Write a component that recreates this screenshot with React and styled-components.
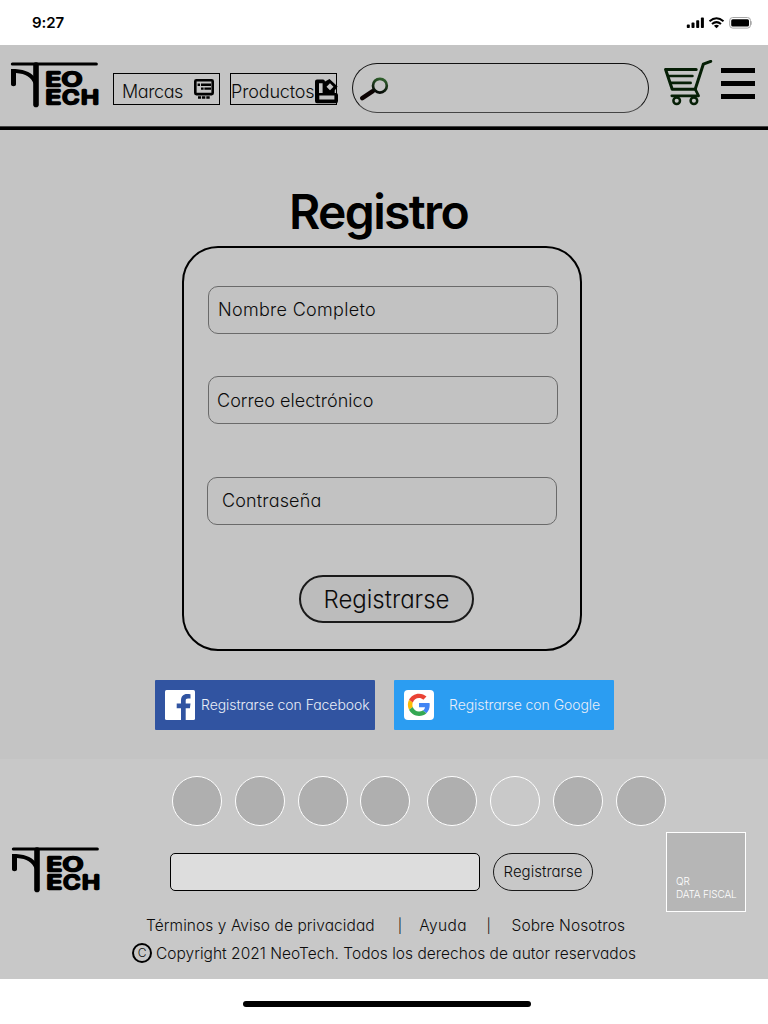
import React from "react";
import styled, { createGlobalStyle } from "styled-components";

const GlobalStyle = createGlobalStyle`
  *, *::before, *::after { box-sizing: border-box; }
  body {
    margin: 0;
    background: #fff;
    color: #0c0c0c;
    font-family: Inter, "Liberation Sans", sans-serif;
    font-weight: 300;
    font-feature-settings: "cv11";
  }
  svg { display: block; flex: none; }
`;

const Screen = styled.div`
  width: 768px;
  height: 1024px;
  display: flex;
  flex-direction: column;
  overflow: hidden;
`;

const StatusBar = styled.div`
  height: 45px;
  flex: none;
  display: flex;
  align-items: center;
  justify-content: space-between;
  padding: 0 16px 0 32px;
  color: #000;
`;

const Time = styled.span`
  font-size: 15px;
  font-weight: 600;
  letter-spacing: -0.1px;
`;

const Header = styled.header`
  height: 85px;
  flex: none;
  display: flex;
  align-items: flex-start;
  padding: 15px 13px 0 10px;
  background: #c4c4c4;
  border-bottom: 3px solid #000;
  box-shadow: inset 0 -1px #444;
`;

const Text = styled.span`
  font-size: ${(p) => p.$size || 15.5}px;
  letter-spacing: ${(p) => p.$track || 0}px;
  line-height: 1.2;
  white-space: nowrap;
`;

const NavButton = styled.a`
  width: 107px;
  height: 32px;
  flex: none;
  display: flex;
  justify-content: space-between;
  margin: 13px 0 0 ${(p) => p.$gap}px;
  padding: ${(p) => p.$pad};
  border: 1px solid #000;
`;

const NavIcon = styled.span`
  flex: none;
  height: 25px;
  margin: -2px ${(p) => p.$out || 0}px 0 0;
`;

const Search = styled.div`
  width: 297px;
  height: 50px;
  flex: none;
  margin: 3px 0 0 15px;
  padding: 12px 7px;
  border: 1px solid #111;
  border-bottom-color: #444;
  border-radius: 25px;
`;

const CartButton = styled.div`
  flex: none;
  margin: 0 0 0 15px;
`;

const Menu = styled.div`
  width: 34px;
  display: flex;
  flex-direction: column;
  gap: 8px;
  margin: 8px 0 0 8px;
`;

const MenuBar = styled.span`
  height: 5px;
  background: #000;
`;

const Main = styled.main`
  height: 629px;
  flex: none;
  display: flex;
  flex-direction: column;
  background: #c4c4c4;
`;

const Title = styled.h1`
  margin: 52px 0 0 289px;
  height: 64px;
  color: #000;
  font-size: 48px;
  font-weight: 570;
  line-height: 60px;
  letter-spacing: -1.65px;
`;

const Card = styled.form`
  width: 400px;
  height: 405px;
  flex: none;
  display: flex;
  flex-direction: column;
  margin-left: 182px;
  padding: 38px 0 0 23px;
  border: 2px solid #000;
  border-radius: 36px;
`;

const Field = styled.label`
  width: 350px;
  height: 48px;
  flex: none;
  display: flex;
  align-items: center;
  margin: 0 0 ${(p) => p.$after}px ${(p) => p.$shift}px;
  padding: ${(p) => p.$top || 0}px 0 1px ${(p) => p.$indent}px;
  background: #c2c2c2;
  border: 1px solid #6a6a6a;
  border-radius: 10px;
`;

const Pill = styled.div`
  width: ${(p) => p.$w}px;
  height: ${(p) => p.$h}px;
  flex: none;
  display: flex;
  align-items: center;
  justify-content: center;
  margin: ${(p) => p.$margin};
  padding-top: ${(p) => p.$top || 0}px;
  background: ${(p) => p.$bg || "transparent"};
  border: ${(p) => p.$line}px solid #1a1a1a;
  border-radius: ${(p) => p.$h / 2}px;
`;

const Socials = styled.div`
  display: flex;
  gap: 19px;
  margin: 29px 0 0 155px;
`;

const SocialButton = styled.div`
  width: 220px;
  height: 50px;
  display: flex;
  align-items: center;
  gap: ${(p) => p.$gap}px;
  padding-left: 10px;
  background: ${(p) => p.$bg};
  color: #e9eef8;
  border-radius: 1px;
`;

const Footer = styled.footer`
  height: 220px;
  flex: none;
  display: flex;
  flex-direction: column;
  padding-top: 17px;
  background: #c8c8c8;
`;

const Circles = styled.div`
  display: flex;
  padding-left: 172px;
`;

const Circle = styled.span`
  width: 50px;
  height: 50px;
  flex: none;
  margin-right: ${(p) => p.$after}px;
  background: ${(p) => (p.$empty ? "#c9c9c9" : "#afafaf")};
  border: 1px solid #fff;
  border-radius: 50%;
`;

const Newsletter = styled.div`
  height: 80px;
  display: flex;
  align-items: flex-start;
  margin-top: 6px;
  padding-left: 11px;
`;

const LogoSlot = styled.div`
  width: 159px;
  padding-top: 13px;
`;

const EmailBox = styled.div`
  width: 310px;
  height: 38px;
  margin-top: 21px;
  background: #ddd;
  border: 1px solid #000;
  border-radius: 5px;
`;

const QrBox = styled.div`
  width: 80px;
  height: 80px;
  display: flex;
  flex-direction: column;
  justify-content: flex-end;
  margin-left: 73px;
  padding: 0 0 10px 9px;
  background: #b6b6b6;
  border: 1px solid #fff;
  color: #fff;
`;

const QrLine = styled.span`
  font-size: 10px;
  line-height: 13px;
  letter-spacing: -0.15px;
  white-space: nowrap;
`;

const Links = styled.nav`
  display: flex;
  align-items: center;
  height: 28px;
  padding-left: 146px;
`;

const Divider = styled.span`
  width: 44.500px;
  padding-left: ${(p) => p.$pad}px;
  font-size: 14px;
  line-height: 18px;
`;

const Copyright = styled.div`
  display: flex;
  align-items: center;
  gap: 4px;
  height: 28px;
  padding-left: 132px;
`;

const CopyMark = styled.span`
  width: 20px;
  height: 20px;
  display: flex;
  align-items: center;
  justify-content: center;
  margin-bottom: 2px;
  border: 2px solid #000;
  border-radius: 50%;
  font-size: 12px;
  line-height: 16px;
`;

const HomeArea = styled.div`
  flex: 1;
  display: flex;
  justify-content: center;
  padding: 22px 0 0 6px;
`;

const HomeIndicator = styled.span`
  width: 288px;
  height: 6px;
  background: #000;
  border-radius: 3px;
`;

function Logo() {
  return (
    <svg width="90" height="48" viewBox="10 60 90 48">
      <g fill="none" stroke="#000" strokeLinecap="round">
        <path d="M12.400 64H96.300" strokeWidth="3.200" />
        <path d="M36 65V104.400" strokeWidth="5.600" />
      </g>
      <path d="M11 69C23 69 30 71.500 34 76.500V84C31 77.500 26 73.600 16 73V84.500Q16 86.300 13.500 86.300Q11 86.300 11 84.500Z" />
      <g
        stroke="#000"
        strokeWidth="2.400"
        strokeLinejoin="round"
        fontFamily="Inter, sans-serif"
        fontWeight="400"
        fontSize="18.200"
      >
        <text x="45.400" y="86" textLength="15.500" lengthAdjust="spacingAndGlyphs">E</text>
        <text x="61.700" y="86" textLength="20.500" lengthAdjust="spacingAndGlyphs">O</text>
        <text x="45.400" y="103.700" textLength="15.500" lengthAdjust="spacingAndGlyphs">E</text>
        <text x="62.300" y="103.700" textLength="17" lengthAdjust="spacingAndGlyphs">C</text>
        <text x="81.100" y="103.700" textLength="18" lengthAdjust="spacingAndGlyphs">H</text>
      </g>
    </svg>
  );
}

function StatusIcons() {
  return (
    <svg width="68" height="14" viewBox="684 16 68 14">
      <rect x="686.800" y="24.600" width="3" height="3.400" rx="0.800" />
      <rect x="691.500" y="22.600" width="3" height="5.400" rx="0.800" />
      <rect x="696.200" y="20.200" width="3" height="7.800" rx="0.800" />
      <rect x="700.900" y="17.600" width="3" height="10.400" rx="0.800" />
      <g fill="none" stroke="#000" strokeWidth="2">
        <path d="M709.500 21.200Q716.500 15.200 723.500 21.200" />
        <path d="M712 24Q716.500 20.200 721 24" />
      </g>
      <path d="M713.900 25.700Q716.500 23.700 719.100 25.700L716.500 28.300Z" />
      <rect x="729.700" y="17.500" width="20.800" height="10.600" rx="3" fill="none" stroke="#a6a6a6" />
      <rect x="731.200" y="19.200" width="17.800" height="7.400" rx="1.500" />
      <path d="M751.300 21v4q1.300-.6 1.300-2t-1.300-2z" fill="#a6a6a6" />
    </svg>
  );
}

function MonitorIcon() {
  return (
    <svg width="20" height="20" viewBox="194 79 20 20">
      <rect x="195.300" y="80.300" width="17.400" height="13.800" rx="1" fill="none" stroke="#000" strokeWidth="2.600" />
      <path d="M197.600 83.600h2.400v2.400h-2.400zM201 83.600h10v2.400h-10zM201 87.400h2.600v2.400H201zM204.400 87.400h6.600v2.400h-6.600zM198 96.200h3v2.600h-3zM201.900 96.200h3.400v2.600h-3.400zM206.300 96.200h3.400v2.600h-3.400z" />
    </svg>
  );
}

function SwatchIcon() {
  return (
    <svg width="24" height="25" viewBox="315 79 24 25" overflow="visible">
      <path
        fillRule="evenodd"
        d="M317 79.500H323Q324.700 79.500 325 81.600L329.500 79L337.600 86.500L334.700 90.600V93H336Q338 93 338 95V101Q338 103.300 336 103.300H317Q315 103.300 315 101V81.500Q315 79.500 317 79.500ZM319 83.300V93H322.600V83.300ZM330 83.200L326.500 86.700L330 90.200L333.500 86.700ZM319.300 95.600V99.600H334.400V95.600Z"
      />
    </svg>
  );
}

function SearchIcon() {
  return (
    <svg width="30" height="26" viewBox="360 76 30 26">
      <defs>
        <linearGradient id="lens" x1="0.700" y1="0" x2="0.400" y2="1">
          <stop offset="0" stopColor="#2f5f2c" />
          <stop offset="1" stopColor="#050805" />
        </linearGradient>
      </defs>
      <path d="M372.800 91.200L362.300 98.200" stroke="#0c0303" strokeWidth="4.400" strokeLinecap="round" />
      <circle cx="379.900" cy="85.700" r="6.900" fill="none" stroke="url(#lens)" strokeWidth="2.700" />
    </svg>
  );
}

function CartIcon() {
  return (
    <svg width="49" height="46" viewBox="664 60 49 46">
      <g fill="none" stroke="#061f06" strokeWidth="3" strokeLinecap="round" strokeLinejoin="round">
        <path d="M710.700 61.400L703.300 64.200L695.200 89.200H672.200L665.600 69.500H696.200" />
        <path d="M669.500 76H692.400M671.500 82.900H690.600" strokeWidth="2.700" />
        <path d="M695.200 89.200L698.600 95.800H671.800" strokeWidth="2.700" />
        <circle cx="676.700" cy="100.700" r="3.300" strokeWidth="2.500" />
        <circle cx="693.900" cy="100.700" r="3.300" strokeWidth="2.500" />
      </g>
    </svg>
  );
}

function FacebookIcon() {
  return (
    <svg width="30" height="30" viewBox="0 0 30 30">
      <rect width="30" height="30" rx="1.500" fill="#fff" />
      <path
        fill="#3154a1"
        d="M16 30V18.200H11.700V13.500H16V10.500C16 6.500 18.400 4.100 22 4.100C23.600 4.100 25 4.200 25.500 4.300V8.500H23C21.200 8.500 20.700 9.400 20.700 10.700V13.500H25.500L24.900 18.200H20.700V30Z"
      />
    </svg>
  );
}

function GoogleIcon() {
  return (
    <svg width="30" height="30" viewBox="0 0 30 30">
      <rect width="30" height="30" rx="4" fill="#fff" />
      <g transform="translate(3.850 3.650) scale(0.465)">
        <path fill="#EA4335" d="M24 9.500c3.540 0 6.710 1.220 9.210 3.600l6.850-6.850C35.900 2.380 30.470 0 24 0 14.620 0 6.510 5.380 2.560 13.220l7.980 6.190C12.430 13.720 17.740 9.500 24 9.500z" />
        <path fill="#4285F4" d="M46.980 24.550c0-1.570-.15-3.090-.38-4.550H24v9.020h12.940c-.58 2.960-2.260 5.480-4.780 7.180l7.730 6c4.510-4.180 7.090-10.360 7.090-17.650z" />
        <path fill="#FBBC05" d="M10.530 28.590c-.48-1.450-.76-2.990-.76-4.590s.27-3.140.76-4.590l-7.980-6.190C.92 16.460 0 20.120 0 24c0 3.880.92 7.540 2.560 10.780l7.970-6.190z" />
        <path fill="#34A853" d="M24 48c6.480 0 11.930-2.130 15.890-5.810l-7.730-6c-2.150 1.450-4.920 2.300-8.160 2.300-6.260 0-11.570-4.220-13.470-9.910l-7.980 6.190C6.510 42.620 14.620 48 24 48z" />
      </g>
    </svg>
  );
}

const circles = [13, 13, 12, 17, 13, 13, 13, 0];

export default function App() {
  return (
    <Screen>
      <GlobalStyle />
      <StatusBar>
        <Time>9:27</Time>
        <StatusIcons />
      </StatusBar>

      <Header>
        <Logo />
        <NavButton $gap={13} $pad="7px 5px 0 8px">
          <Text $size={18} $track={-0.4}>Marcas</Text>
          <NavIcon><MonitorIcon /></NavIcon>
        </NavButton>
        <NavButton $gap={10} $pad="7px 0 0 0">
          <Text $size={18} $track={-0.15}>Productos</Text>
          <NavIcon $out={-3}><SwatchIcon /></NavIcon>
        </NavButton>
        <Search><SearchIcon /></Search>
        <CartButton><CartIcon /></CartButton>
        <Menu>
          <MenuBar />
          <MenuBar />
          <MenuBar />
        </Menu>
      </Header>

      <Main>
        <Title>Registro</Title>
        <Card>
          <Field $after={42} $shift={1} $indent={9}>
            <Text $size={18} $track={0.3}>Nombre Completo</Text>
          </Field>
          <Field $after={53} $shift={1} $indent={8} $top={2}>
            <Text $size={18} $track={0.04}>Correo electrónico</Text>
          </Field>
          <Field $after={50} $shift={0} $indent={14}>
            <Text $size={18} $track={0.15}>Contraseña</Text>
          </Field>
          <Pill $w={175} $h={48} $line={2} $bg="#bcbcbc" $margin="0 0 0 92px" $top={2}>
            <Text $size={24}>Registrarse</Text>
          </Pill>
        </Card>
        <Socials>
          <SocialButton $bg="#3154a1" $gap={6}>
            <FacebookIcon />
            <Text $size={14} $track={-0.07}>Registrarse con Facebook</Text>
          </SocialButton>
          <SocialButton $bg="#2b9df2" $gap={15}>
            <GoogleIcon />
            <Text $size={14} $track={-0.07}>Registrarse con Google</Text>
          </SocialButton>
        </Socials>
      </Main>

      <Footer>
        <Circles>
          {circles.map((gap, i) => (
            <Circle key={i} $after={gap} $empty={i === 5} />
          ))}
        </Circles>
        <Newsletter>
          <LogoSlot><Logo /></LogoSlot>
          <EmailBox />
          <Pill $w={100} $h={38} $line={1} $margin="21px 0 0 13px">
            <Text $size={15}>Registrarse</Text>
          </Pill>
          <QrBox>
            <QrLine>QR</QrLine>
            <QrLine>DATA FISCAL</QrLine>
          </QrBox>
        </Newsletter>
        <Links>
          <Text $track={0.07}>Términos y Aviso de privacidad</Text>
          <Divider $pad={23}>|</Divider>
          <Text $track={0.4}>Ayuda</Text>
          <Divider $pad={19.5}>|</Divider>
          <Text $track={0.1}>Sobre Nosotros</Text>
        </Links>
        <Copyright>
          <CopyMark>C</CopyMark>
          <Text $track={0.02}>Copyright 2021 NeoTech. Todos los derechos de autor reservados</Text>
        </Copyright>
      </Footer>

      <HomeArea>
        <HomeIndicator />
      </HomeArea>
    </Screen>
  );
}
